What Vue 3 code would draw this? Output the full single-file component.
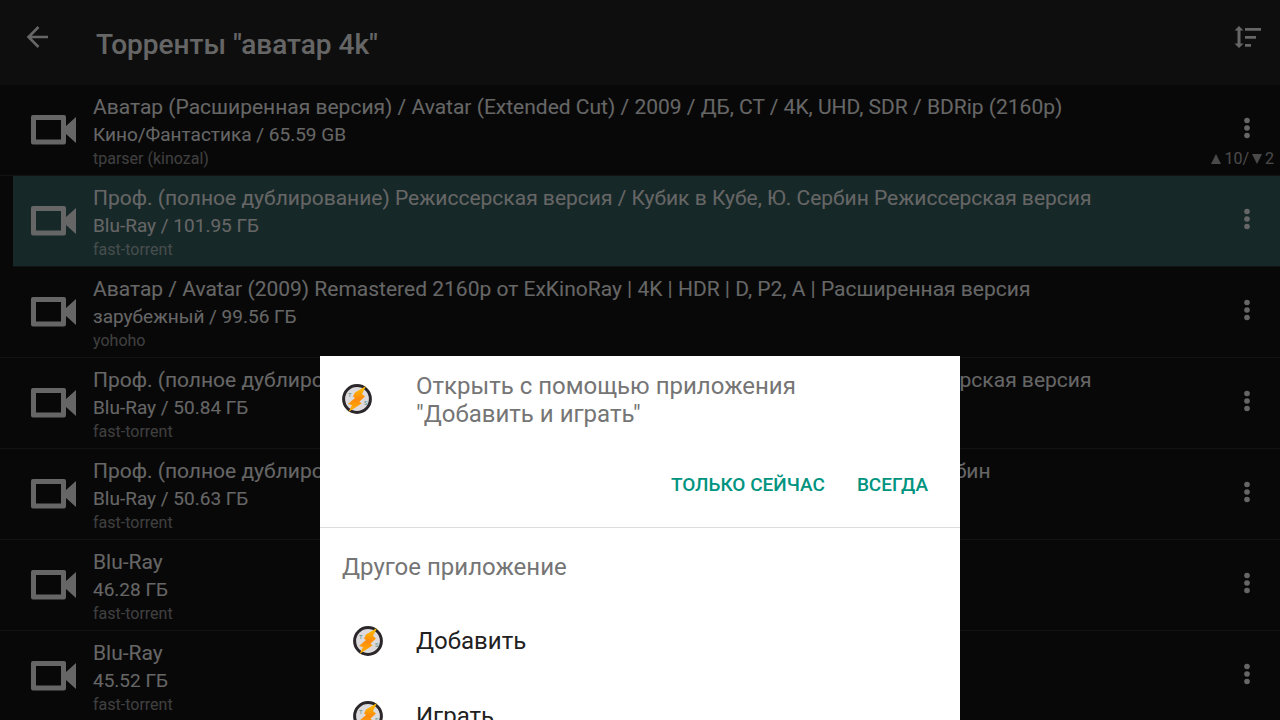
<script setup>
import { ref } from 'vue'

const selected = ref(1)

const torrents = [
  {
    title: 'Аватар (Расширенная версия) / Avatar (Extended Cut) / 2009 / ДБ, СТ / 4K, UHD, SDR / BDRip (2160p)',
    info: 'Кино/Фантастика / 65.59 GB',
    source: 'tparser (kinozal)',
    seeds: 10,
    peers: 2,
  },
  {
    title: 'Проф. (полное дублирование) Режиссерская версия / Кубик в Кубе, Ю. Сербин Режиссерская версия',
    info: 'Blu-Ray / 101.95 ГБ',
    source: 'fast-torrent',
  },
  {
    title: 'Аватар / Avatar (2009) Remastered 2160p от ExKinoRay | 4K | HDR | D, P2, A | Расширенная версия',
    info: 'зарубежный / 99.56 ГБ',
    source: 'yohoho',
  },
  {
    title: 'Проф. (полное дублирование) Режиссерская версия / Кубик в Кубе, Ю. Сербин Режиссерская версия',
    info: 'Blu-Ray / 50.84 ГБ',
    source: 'fast-torrent',
  },
  {
    title: 'Проф. (полное дублирование) Режиссерская версия / Кубик в Кубе, Ю. Гоблин и Ю. Сербин',
    info: 'Blu-Ray / 50.63 ГБ',
    source: 'fast-torrent',
  },
  { title: 'Blu-Ray', info: '46.28 ГБ', source: 'fast-torrent' },
  { title: 'Blu-Ray', info: '45.52 ГБ', source: 'fast-torrent' },
]

const otherApps = ['Добавить', 'Играть']
</script>

<template>
  <div class="page">
    <header class="toolbar">
      <button class="toolbar__button" aria-label="Назад">
        <svg width="24" height="22" viewBox="0 0 24 22" fill="none" stroke="currentColor" stroke-width="2.6">
          <path d="M23 11H4M13.500 1L3.500 11L13.500 21" />
        </svg>
      </button>
      <h1 class="toolbar__title">Торренты "аватар 4k"</h1>
      <button class="toolbar__button" aria-label="Сортировка">
        <svg width="28" height="22" viewBox="0 0 28 22" fill="currentColor">
          <path d="M5 0L9.500 4.500H6.500V17.500H9.500L5 22L0.500 17.500H3.500V4.500H0.500z" />
          <path d="M11 2h16v2.800H11zM11 10h11v2.800H11zM11 18h6v2.800h-6z" />
        </svg>
      </button>
    </header>

    <ul class="list">
      <li
        v-for="(item, i) in torrents"
        :key="i"
        class="row"
        :class="{ 'row--selected': i === selected }"
      >
        <svg class="row__icon" width="45" height="30" viewBox="0 0 45 30" fill="currentColor">
          <path
            fill-rule="evenodd"
            d="M2 0H33Q35 0 35 2V11L45 2V28L35 19V27Q35 29.500 33 29.500H2Q0 29.500 0 27.500V2Q0 0 2 0zM5 5V24.500H30V5z"
          />
        </svg>
        <div class="row__text">
          <span class="row__title">{{ item.title }}</span>
          <span class="row__info">{{ item.info }}</span>
          <span class="row__source">{{ item.source }}</span>
        </div>
        <button class="row__more" aria-label="Меню">
          <svg width="6" height="22" viewBox="0 0 6 22" fill="currentColor">
            <circle cx="3" cy="3.500" r="2.800" />
            <circle cx="3" cy="11" r="2.800" />
            <circle cx="3" cy="18.500" r="2.800" />
          </svg>
        </button>
        <span v-if="item.seeds" class="row__peers">
          <svg width="10" height="10" viewBox="0 0 10 10" fill="currentColor"><path d="M5 0L10 10H0z" /></svg>
          {{ item.seeds }}/
          <svg width="10" height="10" viewBox="0 0 10 10" fill="currentColor"><path d="M0 0H10L5 10z" /></svg>
          {{ item.peers }}
        </span>
      </li>
    </ul>

    <div class="scrim"></div>

    <!-- Symbol shared by the app icons -->
    <svg class="defs" width="0" height="0">
      <defs>
        <linearGradient id="bolt" x1="0" y1="0" x2="0" y2="1">
          <stop offset="0" stop-color="#ffc400" />
          <stop offset="0.5" stop-color="#ff8a0c" />
          <stop offset="1" stop-color="#ffb300" />
        </linearGradient>
        <symbol id="app-icon" viewBox="0 0 30 30">
          <circle cx="15" cy="15" r="13.400" fill="#dcdadc" stroke="#2a2629" stroke-width="3" />
          <text x="6" y="13" font-size="6" font-family="Roboto, sans-serif" fill="#4c8c80">T</text>
          <text x="22" y="21" font-size="6" font-family="Roboto, sans-serif" fill="#4c8c80">S</text>
          <path
            d="M24 2L13 8.500L11 12.500L13 14L6 20L10 21L6.500 28L19.500 19.500L17.500 17.500L23 12.500L20 10z"
            fill="url(#bolt)"
          />
        </symbol>
      </defs>
    </svg>

    <section class="chooser" role="dialog" aria-labelledby="chooser-title">
      <div class="chooser__head">
        <svg class="app-icon" width="30" height="30"><use href="#app-icon" /></svg>
        <h2 id="chooser-title" class="chooser__title">
          Открыть с помощью приложения "Добавить и играть"
        </h2>
      </div>
      <div class="chooser__actions">
        <button class="chooser__action">Только сейчас</button>
        <button class="chooser__action">Всегда</button>
      </div>
      <h3 class="chooser__subtitle">Другое приложение</h3>
      <button v-for="app in otherApps" :key="app" class="chooser__app">
        <svg class="app-icon" width="30" height="30"><use href="#app-icon" /></svg>
        {{ app }}
      </button>
    </section>
  </div>
</template>

<style>
body {
  background: #080808;
}
</style>

<style scoped>
.page {
  display: flex;
  flex-direction: column;
  height: 100vh;
  overflow: hidden;
  background: #141414;
  color: #fff;
  font-family: Roboto, 'Noto Sans', sans-serif;
}

button {
  border: 0;
  padding: 0;
  background: none;
  color: inherit;
  font-family: inherit;
  cursor: pointer;
}

svg {
  display: block;
  flex-shrink: 0;
}

/* Toolbar */
.toolbar {
  display: flex;
  align-items: center;
  flex-shrink: 0;
  height: 85px;
  padding: 0 18px 0 25px;
  background: #232323;
}

.toolbar__button {
  padding-bottom: 11px;
}

.toolbar__title {
  flex-grow: 1;
  margin: 0;
  padding: 4px 0 0 47px;
  font-size: 28px;
  font-weight: 500;
  line-height: 32px;
}

/* Torrent list */
.list {
  flex-grow: 1;
  margin: 0;
  padding: 0;
  list-style: none;
}

.row {
  position: relative;
  display: flex;
  align-items: center;
  padding: 7px 29px 5px 31px;
  border-bottom: 1px solid #303030;
}

.row--selected {
  margin-left: 13px;
  padding-left: 18px;
  background: #396464;
}

.row__icon {
  margin-bottom: 2px;
}

.row__text {
  display: flex;
  flex-direction: column;
  flex-grow: 1;
  min-width: 0;
  padding-left: 17px;
}

.row__title {
  font-size: 21px;
  line-height: 30px;
  white-space: nowrap;
  overflow: hidden;
  text-overflow: ellipsis;
}

.row__info {
  font-size: 19px;
  line-height: 26px;
}

.row__source {
  font-size: 16px;
  line-height: 22px;
  color: rgba(255, 255, 255, 0.6);
}

.row__more {
  padding: 0 1px 6px;
}

.row__peers {
  position: absolute;
  right: 6px;
  bottom: 5px;
  display: flex;
  align-items: center;
  gap: 3px;
  font-size: 16px;
  line-height: 22px;
  opacity: 0.7;
}

.scrim {
  position: fixed;
  inset: 0;
  background: rgba(0, 0, 0, 0.6);
}

.defs {
  position: absolute;
}

/* App chooser sheet */
.chooser {
  position: fixed;
  top: 356px;
  bottom: 0;
  left: 25%;
  width: 50%;
  overflow: hidden;
  background: #fff;
  color: #212121;
}

.chooser__head {
  display: flex;
  align-items: center;
  gap: 44px;
  padding: 16px 120px 0 22px;
}

.chooser__head .app-icon {
  margin-bottom: 2px;
}

.chooser__title {
  margin: 0;
  font-size: 24px;
  font-weight: 400;
  line-height: 28px;
  color: #757575;
}

.chooser__actions {
  display: flex;
  justify-content: flex-end;
  gap: 32px;
  padding: 41px 32px 26px;
  border-bottom: 1px solid #dcdcdc;
}

.chooser__action {
  font-size: 19px;
  font-weight: 500;
  line-height: 32px;
  text-transform: uppercase;
  color: #009480;
}

.chooser__subtitle {
  margin: 0;
  padding: 23px 22px 20px;
  font-size: 24px;
  font-weight: 400;
  line-height: 32px;
  color: #757575;
}

.chooser__app {
  display: flex;
  align-items: center;
  gap: 33px;
  width: 100%;
  height: 75px;
  padding-left: 33px;
  font-size: 24px;
}
</style>
